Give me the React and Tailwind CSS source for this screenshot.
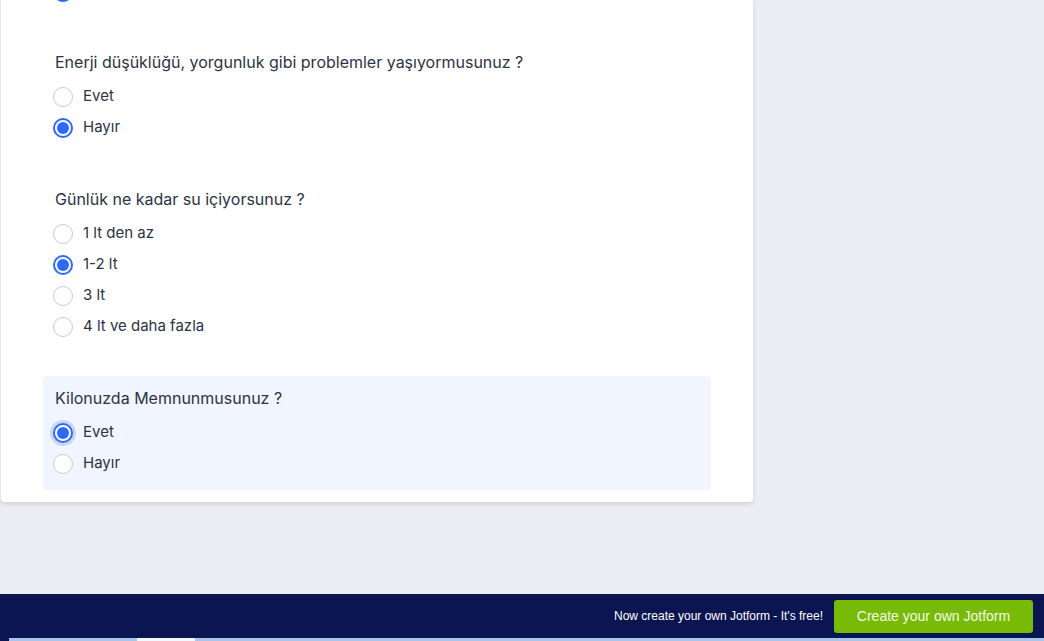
import React from 'react';

const questions = [
  {
    id: 'q1',
    label: 'Enerji düşüklüğü, yorgunluk gibi problemler yaşıyormusunuz ?',
    options: ['Evet', 'Hayır'],
    selected: 'Hayır',
  },
  {
    id: 'q2',
    label: 'Günlük ne kadar su içiyorsunuz ?',
    options: ['1 lt den az', '1-2 lt', '3 lt', '4 lt ve daha fazla'],
    selected: '1-2 lt',
  },
  {
    id: 'q3',
    label: 'Kilonuzda Memnunmusunuz ?',
    options: ['Evet', 'Hayır'],
    selected: 'Evet',
    focused: true,
  },
];

const Radio = ({ checked, focused }) => {
  if (checked) {
    return (
      <span
        className={`flex h-5 w-5 shrink-0 items-center justify-center rounded-full border-2 border-[#2e69ff] bg-white ${
          focused ? 'shadow-[0_0_0_3px_#c6d6ff]' : ''
        }`}
      >
        <span className="h-[12px] w-[12px] rounded-full bg-[#2e69ff]" />
      </span>
    );
  }
  return <span className="h-5 w-5 shrink-0 rounded-full border border-[#c3cad8] bg-white" />;
};

const Option = ({ label, checked, focused }) => (
  <label className="-ml-[2px] flex h-[31px] items-center gap-[10px] text-[15px] text-[#2c3345]">
    <Radio checked={checked} focused={focused} />
    <span>{label}</span>
  </label>
);

const Question = ({ q }) => (
  <li className={`rounded-[3px] px-3 pt-3 pb-[11px] ${q.focused ? 'bg-[#f1f5ff]' : ''}`}>
    <div className="mb-[9px] text-[16px] leading-5 text-[#2c3345]">{q.label}</div>
    <div className="flex flex-col">
      {q.options.map((opt) => (
        <Option key={opt} label={opt} checked={q.selected === opt} focused={q.focused} />
      ))}
    </div>
  </li>
);

export default function App() {
  return (
    <div
      className="flex h-screen flex-col overflow-hidden bg-[#ecedf3]"
      style={{ fontFamily: 'Inter, "Noto Sans", sans-serif' }}
    >
      <div className="flex-1">
        {/* form card */}
        <div className="w-[753px] rounded-b-[4px] border-l border-[#e3e5ea] bg-white pr-[42px] pl-[42px] pb-3 shadow-[0_2px_4px_rgba(0,0,0,0.12)]">
          {/* tail of the previous question, cut off by the top of the window */}
          <div className="flex h-[19px] flex-col justify-end overflow-hidden px-3 pb-3">
            <div className="shrink-0">
              <Option label="" checked />
            </div>
          </div>
          <ul className="mt-[21px] flex flex-col gap-[23px]">
            {questions.map((q) => (
              <Question key={q.id} q={q} />
            ))}
          </ul>
        </div>
      </div>

      {/* jotform footer banner */}
      <div
        className="flex h-[44px] shrink-0 items-center justify-end gap-[11px] bg-[#0a1551] pr-[11px]"
        style={{ fontFamily: '"Liberation Sans", Arial, sans-serif' }}
      >
        <span className="text-[12px] text-white">Now create your own Jotform - It's free!</span>
        <button className="h-[33px] w-[199px] rounded-[3px] bg-[#78bb07] text-[14px] text-[#f3f9e6]">
          Create your own Jotform
        </button>
      </div>
      <div className="flex h-[3px] shrink-0 bg-[#0a1551]">
        <div className="w-[9px]" />
        <div className="w-[128px] bg-[#a8c6ea]" />
        <div className="w-[58px] bg-[#f4f7fb]" />
        <div className="flex-1 bg-[#a8c6ea]" />
      </div>
    </div>
  );
}
